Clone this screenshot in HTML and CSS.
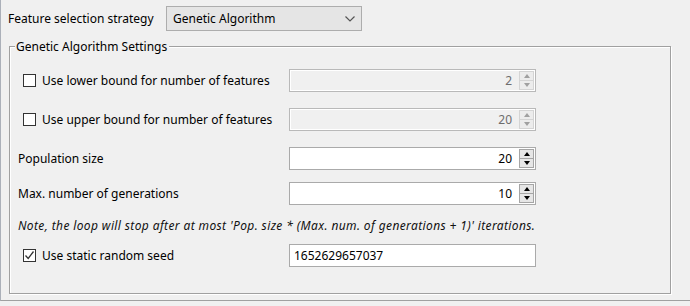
FILE: index.html
```html
<!DOCTYPE html>
<html>
  <head>
    <link rel="stylesheet" href="styles.css">
  </head>
  <body>
  <main class="frame">
    <section class="strategy">
      <span class="strategy-label">Feature selection strategy</span>
      <div class="combo">
        <span>Genetic Algorithm</span>
        <svg class="chevron" width="10" height="6" viewBox="0 0 10 6"><path d="M0.5 0.5 L5 5 L9.5 0.5" fill="none" stroke="#555" stroke-width="1.2"/></svg>
      </div>
    </section>

    <fieldset class="group">
      <legend>Genetic Algorithm Settings</legend>

      <div class="row first">
        <label class="check-label"><span class="check"></span>Use lower bound for number of features</label>
        <div class="spinner disabled">
          <span class="value">2</span>
          <div class="spin"><span class="up"></span><span class="down"></span></div>
        </div>
      </div>

      <div class="row gap16">
        <label class="check-label"><span class="check"></span>Use upper bound for number of features</label>
        <div class="spinner disabled">
          <span class="value">20</span>
          <div class="spin"><span class="up"></span><span class="down"></span></div>
        </div>
      </div>

      <div class="row gap16">
        <span class="label">Population size</span>
        <div class="spinner">
          <span class="value">20</span>
          <div class="spin"><span class="up"></span><span class="down"></span></div>
        </div>
      </div>

      <div class="row gap12">
        <span class="label">Max. number of generations</span>
        <div class="spinner">
          <span class="value">10</span>
          <div class="spin"><span class="up"></span><span class="down"></span></div>
        </div>
      </div>

      <p class="note">Note, the loop will stop after at most 'Pop. size * (Max. num. of generations + 1)' iterations.</p>

      <div class="row">
        <label class="check-label"><span class="check checked"><svg width="11" height="11" viewBox="0 0 11 11"><path d="M1.5 5.5 L4.2 8.5 L9.5 1.5" fill="none" stroke="#333" stroke-width="1.3"/></svg></span>Use static random seed</label>
        <div class="textfield">1652629657037</div>
      </div>
    </fieldset>
  </main>
  </body>
</html>
```

FILE: styles.css
```css
* {
  box-sizing: border-box;
}
body {
  margin: 0;
  background-color: #f0f0f0;
  font-family: "Noto Sans", sans-serif;
  font-size: 12px;
  color: #000;
}
.frame {
  height: 301px;
  border-left: 1px solid #abb0b9;
  border-bottom: 1px solid #a0a0a0;
  box-shadow: 0 1px 0 #fff;
  padding-left: 7px;
}
.strategy {
  display: flex;
  align-items: center;
  padding-top: 6px;
}
.strategy-label {
  width: 158px;
}
.combo {
  width: 196px;
  height: 25px;
  display: flex;
  align-items: center;
  justify-content: space-between;
  padding: 0 6px 0 6px;
  background-color: #e5e5e5;
  border: 1px solid #adadad;
}
.group {
  margin: 8px 0 0 1px;
  width: 662px;
  height: 255px;
  padding: 0 0 0 8px;
  border: 1px solid #a0a0a0;
  box-shadow: inset 1px 1px 0 #fff, 1px 1px 0 #fff;
}
.group legend {
  margin-left: -3px;
  padding: 0 2px 0 1px;
  line-height: 15px;
  background-color: #f0f0f0;
}
.row {
  display: flex;
  align-items: center;
  height: 23px;
}
.row.first {
  margin-top: 15px;
}
.row.gap16 {
  margin-top: 16px;
}
.row.gap12 {
  margin-top: 12px;
}
.label, .check-label {
  width: 271px;
  flex: none;
}
.check-label {
  display: flex;
  align-items: center;
  padding-left: 5px;
}
.check {
  width: 13px;
  height: 13px;
  margin-right: 6px;
  border: 1px solid #333;
  background-color: #fff;
  display: flex;
  align-items: center;
  justify-content: center;
}
.spinner, .textfield {
  width: 247px;
  height: 23px;
  border: 1px solid #aaa;
  background-color: #fff;
  display: flex;
  align-items: center;
}
.spinner .value {
  flex: 1;
  text-align: right;
  padding-right: 7px;
}
.spinner.disabled {
  background-color: #f0f0f0;
  border-color: #b9b9b9;
  box-shadow: inset 0 0 0 1px #fff;
  color: #6d6d6d;
}
.spin {
  width: 15px;
  height: 19px;
  margin-right: 1px;
  display: flex;
  flex-direction: column;
}
.spin span {
  flex: 1;
  background-color: #e6e6e6;
  border: 1px solid #a5a5a5;
  display: flex;
  align-items: center;
  justify-content: center;
}
.spin .down {
  border-top: none;
}
.spin .up::after, .spin .down::after {
  content: '';
  border-left: 3.5px solid transparent;
  border-right: 3.5px solid transparent;
}
.spin .up::after {
  border-bottom: 4px solid #000;
}
.spin .down::after {
  border-top: 4px solid #000;
}
.disabled .spin span {
  border-color: #d4d4d4;
  background-color: #ececec;
}
.disabled .spin .up::after {
  border-bottom-color: #a0a0a0;
}
.disabled .spin .down::after {
  border-top-color: #a0a0a0;
}
.note {
  margin: 13px 0 11px 0;
  line-height: 15px;
  font-style: italic;
  letter-spacing: 0.38px;
  color: #111;
}
.textfield {
  padding-left: 4px;
}
```
